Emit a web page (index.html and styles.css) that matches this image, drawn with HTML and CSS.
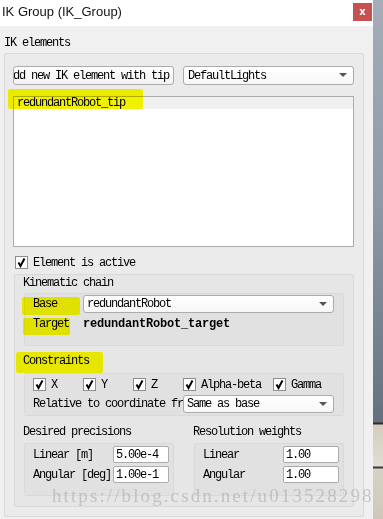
FILE: index.html
```html
<!DOCTYPE html>
<html lang="en">
<head>
  <meta charset="UTF-8">
  <meta name="viewport" content="width=device-width, initial-scale=1.0">
  <title>IK Group</title>
  <link rel="stylesheet" href="styles.css">
</head>
<body>

  <div class="screen">
    <div class="window">
      <div class="titlebar">
        <span class="title">IK Group (IK_Group)</span>
        <button class="close-button">x</button>
      </div>

      <div class="content">
        <div class="group-title">IK elements</div>
        <div class="frame frame-ik">
          <div class="row-top">
            <button class="btn btn-add"><span>Add new IK element with tip</span></button>
            <div class="combo combo-lights">DefaultLights<span class="arrow"></span></div>
          </div>

          <ul class="list">
            <li class="selected">redundantRobot_tip</li>
          </ul>

          <label class="check check-active">
            <span class="box"><svg width="11" height="11" viewBox="0 0 11 11"><path d="M2.5 5.5 L4.5 9 L8.5 1.5" fill="none" stroke="#000" stroke-width="2"/></svg></span>
            Element is active
          </label>

          <div class="frame frame-kin">
            <div class="group-title">Kinematic chain</div>
            <div class="frame frame-chain">
              <div class="form-row">
                <span class="lbl lbl-chain">Base</span>
                <div class="combo combo-base">redundantRobot<span class="arrow"></span></div>
              </div>
              <div class="form-row row-target">
                <span class="lbl lbl-chain">Target</span>
                <b class="target-name">redundantRobot_target</b>
              </div>
            </div>

            <div class="group-title title-cons">Constraints</div>
            <div class="frame frame-cons">
              <div class="checks">
                <label class="check w50"><span class="box"><svg width="11" height="11" viewBox="0 0 11 11"><path d="M2.5 5.5 L4.5 9 L8.5 1.5" fill="none" stroke="#000" stroke-width="2"/></svg></span>X</label>
                <label class="check w50"><span class="box"><svg width="11" height="11" viewBox="0 0 11 11"><path d="M2.5 5.5 L4.5 9 L8.5 1.5" fill="none" stroke="#000" stroke-width="2"/></svg></span>Y</label>
                <label class="check w50"><span class="box"><svg width="11" height="11" viewBox="0 0 11 11"><path d="M2.5 5.5 L4.5 9 L8.5 1.5" fill="none" stroke="#000" stroke-width="2"/></svg></span>Z</label>
                <label class="check w90"><span class="box"><svg width="11" height="11" viewBox="0 0 11 11"><path d="M2.5 5.5 L4.5 9 L8.5 1.5" fill="none" stroke="#000" stroke-width="2"/></svg></span>Alpha-beta</label>
                <label class="check"><span class="box"><svg width="11" height="11" viewBox="0 0 11 11"><path d="M2.5 5.5 L4.5 9 L8.5 1.5" fill="none" stroke="#000" stroke-width="2"/></svg></span>Gamma</label>
              </div>
              <div class="form-row row-relative">
                <span class="lbl lbl-relative">Relative to coordinate fr</span>
                <div class="combo combo-relative">Same as base<span class="arrow"></span></div>
              </div>
            </div>

            <div class="precisions">
              <div class="col">
                <div class="group-title">Desired precisions</div>
                <div class="frame frame-prec">
                  <div class="prec-row"><span class="lbl lbl-prec">Linear [m]</span><input class="field" type="text" value="5.00e-4"></div>
                  <div class="prec-row"><span class="lbl lbl-prec">Angular [deg]</span><input class="field" type="text" value="1.00e-1"></div>
                </div>
              </div>
              <div class="col">
                <div class="group-title">Resolution weights</div>
                <div class="frame frame-prec">
                  <div class="prec-row"><span class="lbl lbl-prec">Linear</span><input class="field" type="text" value="1.00"></div>
                  <div class="prec-row"><span class="lbl lbl-prec">Angular</span><input class="field" type="text" value="1.00"></div>
                </div>
              </div>
            </div>
          </div>
        </div>
      </div>
    </div>
    <div class="desktop"></div>
  </div>

  <!-- marker strokes drawn on the screenshot -->
  <span class="marker marker-tip"></span>
  <span class="marker marker-base"></span>
  <span class="marker marker-target"></span>
  <span class="marker marker-cons"></span>

  <div class="watermark">https://blog.csdn.net/u013528298</div>

</body>
</html>
```

FILE: styles.css
```css
* {
  box-sizing: border-box;
}

body {
  margin: 0;
  padding: 0;
  width: 383px;
  height: 519px;
  overflow: hidden;
  position: relative;
  font-family: "Liberation Mono", monospace;
  font-size: 12px;
  letter-spacing: -1.2px;
  color: #000;
}

.screen {
  display: flex;
  height: 519px;
}

.window {
  width: 373px;
  background: #f0f0f0;
  display: flex;
  flex-direction: column;
}

.titlebar {
  height: 26px;
  background: #fff;
  display: flex;
  align-items: flex-start;
  padding: 3px 1px 0 2px;
}

.title {
  font-family: "Liberation Sans", Arial, sans-serif;
  font-size: 13px;
  letter-spacing: 0;
  line-height: 18px;
  color: #111;
}

.close-button {
  margin-left: auto;
  width: 19px;
  height: 18px;
  border: none;
  padding: 0;
  background: #c75050;
  color: #fff;
  font-family: "DejaVu Sans", sans-serif;
  font-size: 10px;
  font-weight: bold;
  letter-spacing: 0;
  line-height: 18px;
}

.content {
  padding: 11px 0 0 4px;
}

.group-title {
  line-height: 13px;
  height: 12px;
  margin-bottom: 4px;
  white-space: nowrap;
}

.frame {
  border: 1px solid #d9d9d9;
  border-radius: 2px;
  background: rgba(0, 0, 0, 0.018);
}

.frame-ik {
  width: 360px;
  height: 464px;
  padding: 12px 9px 0 8px;
}

.row-top {
  display: flex;
  gap: 9px;
  height: 19px;
}

.btn {
  width: 161px;
  height: 19px;
  padding: 0;
  border: 1px solid #adadad;
  border-radius: 3px;
  background: linear-gradient(#fdfdfd, #f3f3f3);
  font: inherit;
  letter-spacing: inherit;
  color: #000;
  display: flex;
  justify-content: center;
  align-items: center;
  overflow: hidden;
  white-space: nowrap;
}

.btn-add span {
  margin-left: -11px;
}

.combo {
  position: relative;
  height: 18px;
  border: 1px solid #acacac;
  border-radius: 3px;
  background: linear-gradient(#ffffff, #f7f7f7);
  line-height: 17px;
  padding-left: 3px;
  white-space: nowrap;
}

.combo-lights {
  width: 171px;
  height: 19px;
  line-height: 18px;
  padding-left: 4px;
}

.arrow {
  position: absolute;
  right: 6px;
  top: 6px;
  width: 0;
  height: 0;
  border-left: 4px solid transparent;
  border-right: 4px solid transparent;
  border-top: 4px solid #555;
}

.list {
  list-style: none;
  margin: 11px 0 0 0;
  padding: 0;
  width: 341px;
  height: 151px;
  border: 1px solid #acacac;
  background: #fff;
}

.list li {
  height: 12px;
  line-height: 13px;
  padding-left: 3px;
}

.list li.selected {
  background: #f0f0f0;
}

.check {
  display: flex;
  align-items: center;
  height: 13px;
  white-space: nowrap;
}

.box {
  width: 13px;
  height: 13px;
  border: 1px solid #8e8e8e;
  background: #fff;
  margin-right: 5px;
  display: flex;
  justify-content: center;
  align-items: center;
}

.check-active {
  margin: 9px 0 0 2px;
}

.frame-kin {
  margin: 5px 0 0 1px;
  width: 340px;
  height: 233px;
  padding: 2px 0 0 9px;
}

.frame-kin .group-title {
  margin-left: -1px;
}

.frame-chain {
  width: 320px;
  height: 53px;
  margin-top: 5px;
  padding: 1px 0 0 8px;
}

.frame-kin .frame-chain {
  margin-top: 1px;
}

.form-row {
  display: flex;
  align-items: center;
  height: 18px;
}

.row-target {
  margin-top: 2px;
}

.lbl {
  white-space: nowrap;
}

.lbl-chain {
  width: 50px;
}

.combo-base {
  width: 251px;
}

.target-name {
  letter-spacing: -0.2px;
}

.title-cons {
  margin-top: 9px;
  margin-bottom: 6px;
}

.frame-cons {
  width: 320px;
  height: 43px;
  padding: 4px 0 0 8px;
}

.checks {
  display: flex;
  height: 13px;
}

.w50 {
  width: 50px;
}

.w90 {
  width: 90px;
}

.row-relative {
  margin-top: 4px;
}

.lbl-relative {
  width: 150px;
}

.combo-relative {
  width: 151px;
}

.precisions {
  display: flex;
  gap: 20px;
  margin-top: 10px;
}

.col .group-title {
  margin-bottom: 5px;
}

.frame-prec {
  width: 150px;
  height: 53px;
  padding: 2px 0 0 8px;
}

.prec-row {
  display: flex;
  align-items: center;
  height: 17px;
  margin-bottom: 3px;
}

.lbl-prec {
  width: 80px;
}

.field {
  width: 56px;
  height: 17px;
  border: 1px solid #acacac;
  border-radius: 2px;
  background: #fff;
  padding: 0 0 0 2px;
  font: inherit;
  letter-spacing: inherit;
  color: #000;
}

.desktop {
  width: 10px;
  background: linear-gradient(to bottom,
    #a4adb8 0px, #8f9aa6 200px, #66717f 422px,
    #2e2e2e 423px, #2e2e2e 424px,
    #d4cdbf 425px, #e2ddd2 466px,
    #3a3a3a 467px, #3a3a3a 468px,
    #d7d1c5 469px, #cfc8ba 519px);
}

.marker {
  position: absolute;
  background: #ffff00;
  mix-blend-mode: multiply;
  border-radius: 2px;
}

.marker-tip {
  left: 8px;
  top: 89px;
  width: 135px;
  height: 20px;
}

.marker-base {
  left: 22px;
  top: 297px;
  width: 58px;
  height: 18px;
}

.marker-target {
  left: 23px;
  top: 318px;
  width: 47px;
  height: 17px;
}

.marker-cons {
  left: 16px;
  top: 352px;
  width: 87px;
  height: 21px;
}

.watermark {
  position: absolute;
  left: 52px;
  top: 486px;
  font-family: "Liberation Serif", serif;
  font-size: 19px;
  letter-spacing: 2.1px;
  line-height: 20px;
  color: rgba(160, 160, 160, 0.5);
  white-space: nowrap;
  pointer-events: none;
}
```
